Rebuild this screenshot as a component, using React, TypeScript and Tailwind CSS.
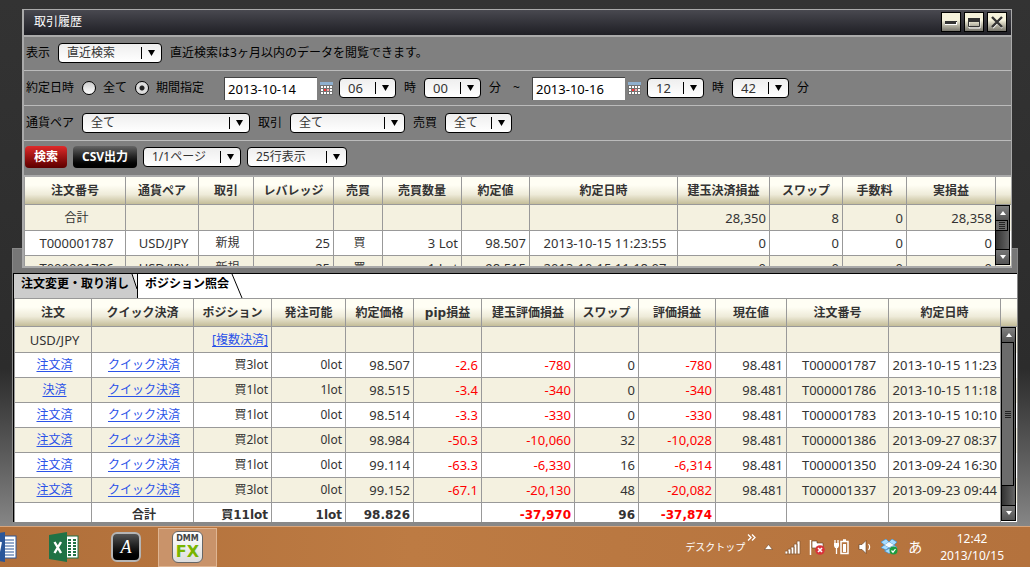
import { useState } from 'react';
import clsx from 'clsx';

interface Column {
  label: string;
  width: number;
  align: 'left' | 'center' | 'right';
}

interface PickerProps {
  label: string;
  options: string[];
  className: string;
}

const HISTORY_COLUMNS: Column[] = [
  { label: '注文番号', width: 101, align: 'center' },
  { label: '通貨ペア', width: 73, align: 'center' },
  { label: '取引', width: 55, align: 'center' },
  { label: 'レバレッジ', width: 80, align: 'right' },
  { label: '売買', width: 49, align: 'center' },
  { label: '売買数量', width: 79, align: 'right' },
  { label: '約定値', width: 68, align: 'right' },
  { label: '約定日時', width: 148, align: 'center' },
  { label: '建玉決済損益', width: 92, align: 'right' },
  { label: 'スワップ', width: 73, align: 'right' },
  { label: '手数料', width: 64, align: 'right' },
  { label: '実損益', width: 89, align: 'right' },
];

const HISTORY_ROWS = [
  ['合計', '', '', '', '', '', '', '', '28,350', '8', '0', '28,358'],
  ['T000001787', 'USD/JPY', '新規', '25', '買', '3 Lot', '98.507', '2013-10-15 11:23:55', '0', '0', '0', '0'],
  ['T000001786', 'USD/JPY', '新規', '25', '買', '1 Lot', '98.515', '2013-10-15 11:18:07', '0', '0', '0', '0'],
];

const POSITION_COLUMNS: Column[] = [
  { label: '注文', width: 77, align: 'center' },
  { label: 'クイック決済', width: 102, align: 'center' },
  { label: 'ポジション', width: 78, align: 'right' },
  { label: '発注可能', width: 74, align: 'right' },
  { label: '約定価格', width: 68, align: 'right' },
  { label: 'pip損益', width: 68, align: 'right' },
  { label: '建玉評価損益', width: 93, align: 'right' },
  { label: 'スワップ', width: 64, align: 'right' },
  { label: '評価損益', width: 77, align: 'right' },
  { label: '現在値', width: 71, align: 'right' },
  { label: '注文番号', width: 102, align: 'center' },
  { label: '約定日時', width: 112, align: 'right' },
];

const POSITION_ROWS = [
  ['USD/JPY', '', '[複数決済]', '', '', '', '', '', '', '', '', ''],
  ['注文済', 'クイック決済', '買3lot', '0lot', '98.507', '-2.6', '-780', '0', '-780', '98.481', 'T000001787', '2013-10-15 11:23'],
  ['決済', 'クイック決済', '買1lot', '1lot', '98.515', '-3.4', '-340', '0', '-340', '98.481', 'T000001786', '2013-10-15 11:18'],
  ['注文済', 'クイック決済', '買1lot', '0lot', '98.514', '-3.3', '-330', '0', '-330', '98.481', 'T000001783', '2013-10-15 10:10'],
  ['注文済', 'クイック決済', '買2lot', '0lot', '98.984', '-50.3', '-10,060', '32', '-10,028', '98.481', 'T000001386', '2013-09-27 08:37'],
  ['注文済', 'クイック決済', '買1lot', '0lot', '99.114', '-63.3', '-6,330', '16', '-6,314', '98.481', 'T000001350', '2013-09-24 16:30'],
  ['注文済', 'クイック決済', '買3lot', '0lot', '99.152', '-67.1', '-20,130', '48', '-20,082', '98.481', 'T000001337', '2013-09-23 09:44'],
  ['', '合計', '買11lot', '1lot', '98.826', '', '-37,970', '96', '-37,874', '', '', ''],
];

const LINKS = ['注文済', '決済', 'クイック決済', '[複数決済]'];

const ALIGN = {
  left: 'pl-0.5 text-left',
  center: 'pl-1.5 text-center',
  right: 'pl-0.5 text-right',
};

const isLatin = (text: string) => /^([-\d.,: T]+|USD\/JPY|\d Lot)$/.test(text);

const Picker = ({ label, options, className }: PickerProps) => (
  <span className={clsx('relative inline-flex shrink-0', className)}>
    <select
      aria-label={label}
      className={clsx(
        'h-5 w-full appearance-none rounded-sm border border-black bg-linear-to-b from-[#eeeeee] to-white pl-2 leading-4 text-[#333]',
        isLatin(options[0]) ? 'text-[13px]' : 'text-xs'
      )}
    >
      {options.map((option) => (
        <option key={option}>{option}</option>
      ))}
    </select>
    <span className="pointer-events-none absolute inset-y-0 right-[7px] flex items-center gap-1.5">
      <span className="h-3 w-px bg-black" />
      <svg width="7" height="6" viewBox="0 0 7 6">
        <path d="M0 0h7L3.5 6z" fill="#000" />
      </svg>
    </span>
  </span>
);

const DateField = ({ label, value }: { label: string; value: string }) => (
  <span className="flex shrink-0 items-center gap-[3px]">
    <input
      type="text"
      aria-label={label}
      defaultValue={value}
      className="h-[23px] w-[93px] border-t border-l border-[#444] bg-white px-[3px] text-[13px] text-black"
    />
    <button type="button" aria-label={`${label}カレンダー`}>
      <svg width="13" height="13" viewBox="0 0 13 13">
        <rect width="13" height="13" fill="#737373" />
        <rect width="13" height="3" fill="#8fb0cf" />
        <path
          d="M1 4h2v2H1zM4 4h2v2H4zM7 4h2v2H7zM10 4h2v2h-2zM1 7h2v2H1zM10 7h2v2h-2zM1 10h2v2H1zM4 10h2v2H4zM7 10h2v2H7zM10 10h2v2h-2z"
          fill="#fff"
        />
        <path d="M4 7h2v2H4z" fill="#ff3535" />
        <path d="M7 7h2v2H7z" fill="#ffa4a4" />
      </svg>
    </button>
  </span>
);

const Scrollbar = ({ thumb }: { thumb: string }) => (
  <div className="absolute top-7 right-px bottom-px flex w-[15px] flex-col border border-black bg-linear-to-r from-[#333] to-[#666]">
    <button
      type="button"
      aria-label="上へスクロール"
      className="flex h-3.5 shrink-0 items-center justify-center bg-linear-to-b from-[#808080] to-[#555]"
    >
      <svg width="6" height="4" viewBox="0 0 6 4">
        <path d="M3 0l3 4H0z" fill="#fff" />
      </svg>
    </button>
    <div className="min-h-0 flex-1">
      <div
        className={clsx(
          'flex w-3 flex-col items-center justify-center gap-px border border-l-0 border-black bg-[#6b6b6b]',
          thumb
        )}
      >
        <span className="h-px w-1.5 bg-[#222]" />
        <span className="h-px w-1.5 bg-[#222]" />
        <span className="h-px w-1.5 bg-[#222]" />
        <span className="h-px w-1.5 bg-[#222]" />
      </div>
    </div>
    <button
      type="button"
      aria-label="下へスクロール"
      className="flex h-[15px] shrink-0 items-center justify-center border-t border-black bg-linear-to-b from-[#777] to-[#555]"
    >
      <svg width="6" height="4" viewBox="0 0 6 4">
        <path d="M0 0h6L3 4z" fill="#fff" />
      </svg>
    </button>
  </div>
);

interface GridProps {
  columns: Column[];
  rows: string[][];
  height: string;
  thumb: string;
  boldTotal?: boolean;
}

const Grid = ({ columns, rows, height, thumb, boldTotal = false }: GridProps) => (
  <div className="relative border-l border-[#999]">
    <div className={clsx('overflow-hidden', height)}>
      <table className="w-full table-fixed border-separate border-spacing-0 text-[#333]">
        <colgroup>
          {columns.map((column) => (
            <col key={column.label} style={{ width: column.width }} />
          ))}
          <col className="w-4" />
        </colgroup>
        <thead>
          <tr>
            {columns.map((column) => (
              <th
                key={column.label}
                className="h-7 border-r border-b border-[#999] bg-linear-to-b from-[#fffef4] from-30% via-[#eeebd9] via-65% to-[#c4bd99] p-0 text-center font-['DejaVu_Sans','Noto_Sans_CJK_JP',sans-serif] text-xs leading-4 font-bold whitespace-nowrap"
              >
                {column.label}
              </th>
            ))}
            <td className="border-b border-[#999] bg-linear-to-b from-[#fffef4] from-30% via-[#eeebd9] via-65% to-[#c4bd99] p-0" />
          </tr>
        </thead>
        <tbody>
          {rows.map((row, rowIndex) => {
            const isTotal = boldTotal && rowIndex === rows.length - 1;
            return (
              <tr key={rowIndex} className={rowIndex % 2 === 0 ? 'bg-[#f4f1e0]' : 'bg-white'}>
                {row.map((text, i) => (
                  <td
                    key={columns[i].label}
                    className={clsx(
                      'border-r border-b border-[#999] py-0 pr-[3px] leading-4 whitespace-nowrap',
                      rowIndex === 0 ? 'h-[26px]' : 'h-[25px]',
                      isTotal
                        ? "font-['DejaVu_Sans','Noto_Sans_CJK_JP',sans-serif] text-xs font-bold"
                        : isLatin(text)
                          ? 'text-[13px]'
                          : 'text-xs',
                      ALIGN[columns[i].align],
                      text.startsWith('-') && 'text-[#ff0000]'
                    )}
                  >
                    {LINKS.includes(text) ? (
                      <a href="#" className="text-[#2a52e8] underline underline-offset-2">
                        {text}
                      </a>
                    ) : (
                      text
                    )}
                  </td>
                ))}
                <td className="p-0" />
              </tr>
            );
          })}
        </tbody>
      </table>
    </div>
    <Scrollbar thumb={thumb} />
  </div>
);

const WINDOW_BUTTON =
  'flex h-5 w-5 items-center justify-center border border-black bg-linear-to-b from-[#f5f2dc] from-40% to-[#77756c]';

const HistoryWindow = () => {
  const [range, setRange] = useState('period');

  return (
    <section className="relative z-10 mr-[18px] ml-[22px] border-2 border-t border-r border-[#aaa] bg-[#808080] text-xs leading-4">
      <header className="flex h-[25px] items-center justify-between bg-linear-to-b from-[#494950] to-[#1f1f25] pr-1 pb-0.5 pl-2.5">
        <h1 className="text-white">取引履歴</h1>
        <div className="flex gap-[3px]">
          <button type="button" aria-label="最小化" className={WINDOW_BUTTON}>
            <svg width="14" height="14" viewBox="0 0 14 14">
              <path d="M1 6h12v3H1z" fill="#333" />
              <path d="M1 9h12v1H1zM12 7h1v3h-1z" fill="#fff" />
            </svg>
          </button>
          <button type="button" aria-label="最大化" className={WINDOW_BUTTON}>
            <svg width="14" height="14" viewBox="0 0 14 14">
              <path d="M2 4h11v9H2z" fill="none" stroke="#fff" />
              <path d="M1.5 3.5h11v8h-11z" fill="none" stroke="#333" />
              <path d="M1 3h12v4H1z" fill="#333" />
            </svg>
          </button>
          <button type="button" aria-label="閉じる" className={WINDOW_BUTTON}>
            <svg width="14" height="14" viewBox="0 0 14 14">
              <path d="M3 3l9 10M12 3l-9 10" stroke="#fff" strokeWidth="1.5" />
              <path d="M2 2l10 10M12 2L2 12" stroke="#333" strokeWidth="2.4" />
            </svg>
          </button>
        </div>
      </header>

      {/* Search conditions */}
      <form onSubmit={(e) => e.preventDefault()}>
        <div className="flex h-[35px] items-center gap-2 border-t-2 border-[#aaa] pb-0.5 pl-0.5">
          <span>表示</span>
          <Picker label="表示" options={['直近検索', '過去検索']} className="w-[104px]" />
          <p>直近検索は3ヶ月以内のデータを閲覧できます。</p>
        </div>

        <div className="flex h-[35px] items-center gap-2 border-t border-[#bbb] pl-0.5">
          <span>約定日時</span>
          <label className="flex items-center gap-[7px]">
            <input
              type="radio"
              name="range"
              checked={range === 'all'}
              onChange={() => setRange('all')}
              className="h-3.5 w-3.5 appearance-none rounded-full border border-black bg-linear-to-b from-[#ccc] to-white checked:bg-[radial-gradient(#222_2px,#ddd_3px)]"
            />
            全て
          </label>
          <label className="flex items-center gap-[7px]">
            <input
              type="radio"
              name="range"
              checked={range === 'period'}
              onChange={() => setRange('period')}
              className="h-3.5 w-3.5 appearance-none rounded-full border border-black bg-linear-to-b from-[#ccc] to-white checked:bg-[radial-gradient(#222_2px,#ddd_3px)]"
            />
            期間指定
          </label>
          <div className="flex items-center gap-2 pl-3">
            <div className="flex items-center gap-1.5">
              <DateField label="開始日" value="2013-10-14" />
              <Picker label="開始時" options={['06']} className="w-[57px]" />
            </div>
            <span>時</span>
            <Picker label="開始分" options={['00']} className="w-[57px]" />
            <span>分</span>
            <span className="px-1">~</span>
            <div className="flex items-center gap-1.5">
              <DateField label="終了日" value="2013-10-16" />
              <Picker label="終了時" options={['12']} className="w-[57px]" />
            </div>
            <span>時</span>
            <Picker label="終了分" options={['42']} className="w-[57px]" />
            <span>分</span>
          </div>
        </div>

        <div className="flex h-[35px] items-center gap-2 border-t border-[#bbb] pl-0.5">
          <span>通貨ペア</span>
          <Picker label="通貨ペア" options={['全て', 'USD/JPY']} className="w-[168px]" />
          <span>取引</span>
          <Picker label="取引" options={['全て', '新規', '決済']} className="w-[115px]" />
          <span>売買</span>
          <Picker label="売買" options={['全て', '買', '売']} className="w-[67px]" />
        </div>

        <div className="flex h-[35px] items-center gap-1.5 border-t border-[#bbb] pb-0.5 pl-px">
          <button
            type="submit"
            className="h-[22px] w-[42px] rounded-sm bg-linear-to-b from-[#e02a2a] to-[#5c0000] font-bold text-white"
          >
            検索
          </button>
          <button
            type="button"
            className="h-[22px] w-16 rounded-sm bg-linear-to-b from-[#666] via-[#222] via-50% to-black font-bold text-white"
          >
            CSV出力
          </button>
          <Picker label="ページ" options={['1/1ページ']} className="w-[98px]" />
          <Picker label="表示行数" options={['25行表示', '50行表示']} className="w-[100px]" />
        </div>
      </form>

      <div className="border-t-2 border-[#aaa]">
        <Grid columns={HISTORY_COLUMNS} rows={HISTORY_ROWS} height="h-[89px]" thumb="h-[11px]" />
      </div>
    </section>
  );
};

const PositionWindow = () => (
  <section className="relative mr-3 ml-3 -mt-5 border border-b-4 border-[#888] bg-[#777] pt-6">
    <div className="border-t border-l border-black bg-white">
      <div className="flex h-6 items-stretch text-xs font-bold" role="tablist">
        <button
          type="button"
          role="tab"
          aria-selected="false"
          className="flex items-start border-r border-black bg-[#ccc] pt-0.5 pl-[7px]"
        >
          注文変更・取り消し
          <svg width="8" height="20" viewBox="0 0 8 20" className="-mt-0.5">
            <path d="M3 0h5v15z" fill="#eee" />
            <path d="M3 0l5 15" stroke="#000" />
          </svg>
        </button>
        <button type="button" role="tab" aria-selected="true" className="flex items-start bg-white pt-0.5 pl-[7px]">
          ポジション照会
          <svg width="14" height="24" viewBox="0 0 14 24" className="-mt-0.5">
            <path d="M3 0l10 24" stroke="#000" />
          </svg>
        </button>
      </div>
      <div className="border-t border-[#999]">
        <Grid
          columns={POSITION_COLUMNS}
          rows={POSITION_ROWS}
          height="h-[223px]"
          thumb="h-36"
          boldTotal
        />
      </div>
    </div>
  </section>
);

const Taskbar = () => (
  <footer className="flex h-[41px] items-center justify-between overflow-hidden border-t border-[#d8a57c] bg-linear-to-r from-[#b06f3a] via-[#bd7b43] via-40% to-[#b4723d] pr-[26px] text-white">
    <nav className="flex items-center">
      <button type="button" aria-label="Word" className="-ml-[13px]">
        <svg width="30" height="30" viewBox="0 0 30 30">
          <rect x="16" y="4" width="13" height="22" fill="#fff" stroke="#2a5699" />
          <path d="M18 8h9M18 11h9M18 14h9M18 17h9M18 20h9M18 23h9" stroke="#2a5699" />
          <path d="M0 3l18-3v30L0 27z" fill="#2a5699" />
          <path d="M4 10l2 10 3-9 3 9 2-10" fill="none" stroke="#fff" strokeWidth="2" />
        </svg>
      </button>
      <button type="button" aria-label="Excel" className="ml-8">
        <svg width="30" height="30" viewBox="0 0 30 30">
          <rect x="16" y="4" width="13" height="22" fill="#fff" stroke="#207245" />
          <path
            d="M19 7h3v2h-3zM24 7h3v2h-3zM19 10h3v2h-3zM24 10h3v2h-3zM19 13h3v2h-3zM24 13h3v2h-3zM19 16h3v2h-3zM24 16h3v2h-3zM19 19h3v2h-3zM24 19h3v2h-3zM19 22h3v2h-3zM24 22h3v2h-3z"
            fill="#207245"
          />
          <path d="M0 3l18-3v30L0 27z" fill="#207245" />
          <path d="M5.5 10l6.500 11M12 10L5.500 21" stroke="#fff" strokeWidth="2.4" />
        </svg>
      </button>
      <button
        type="button"
        className="ml-8 flex h-[30px] w-[30px] items-center justify-center rounded-md border-2 border-[#b5b5b5] bg-linear-to-b from-[#555] to-black font-['Liberation_Serif',serif] text-lg leading-none italic"
      >
        A
      </button>
      <button
        type="button"
        className="ml-[17px] flex h-[39px] w-[59px] items-center justify-center border border-[#dfb592] bg-[#c9936a]"
      >
        <span className="flex h-8 w-[31px] flex-col items-center justify-center rounded-md border border-[#666] bg-linear-to-b from-white to-[#ddd] font-['DejaVu_Sans',sans-serif] font-bold">
          <span className="text-[8px] leading-2.5 text-[#444]">DMM</span>
          <span className="text-base leading-4 text-[#78b400]">FX</span>
        </span>
      </button>
    </nav>

    <div className="flex items-center">
      <span className="text-[10px] leading-4">デスクトップ</span>
      <button type="button" aria-label="その他" className="mb-5 ml-0.5">
        <svg width="9" height="7" viewBox="0 0 9 7">
          <path d="M1 .5l3 3-3 3M5 .5l3 3-3 3" fill="none" stroke="#fff" strokeWidth="1.3" />
        </svg>
      </button>
      <button type="button" aria-label="隠れているアイコン" className="ml-2">
        <svg width="9" height="6" viewBox="0 0 9 6">
          <path d="M4.500 .5l4 5h-8z" fill="#fff" stroke="#6b4728" strokeWidth=".6" />
        </svg>
      </button>
      <div className="ml-3 flex items-center gap-2">
        <svg width="16" height="16" viewBox="0 0 16 16">
          <path
            d="M0 12h3v3H0zM3 10h3v5H3zM6 8h3v7H6zM9 5h3v10H9zM12 2h3v13h-3z"
            fill="#fff"
            stroke="#8a5a34"
            strokeWidth=".8"
          />
        </svg>
        <svg width="16" height="16" viewBox="0 0 16 16">
          <path d="M1.500 1v15" stroke="#fff" strokeWidth="1.500" />
          <path d="M3 2h5v2h6v7H8V9H3z" fill="#fff" stroke="#5b3a20" strokeWidth=".6" />
          <circle cx="11" cy="11" r="4.800" fill="#d9333a" />
          <path d="M9 9l4 4M13 9l-4 4" stroke="#fff" strokeWidth="1.600" />
        </svg>
        <svg width="16" height="16" viewBox="0 0 16 16">
          <path d="M8 2.500h7v12H8zM10 1h3" fill="none" stroke="#fff" strokeWidth="1.500" />
          <path d="M10 5h3v8h-3z" fill="#fff" />
          <path d="M2 1v4M5 1v4M3.500 8v7" stroke="#fff" strokeWidth="1.300" />
          <path d="M1 4h5v3L5 9H2L1 7z" fill="#fff" />
        </svg>
        <svg width="16" height="16" viewBox="0 0 16 16">
          <path d="M2 5.500h3L9 1.500v13l-4-4H2z" fill="#fff" stroke="#5b3a20" strokeWidth=".6" />
          <path d="M11.500 5c1.500 2 1.500 4 0 6" fill="none" stroke="#fff" strokeWidth="1.200" />
        </svg>
        <svg width="17" height="16" viewBox="0 0 17 16">
          <path
            d="M5 0L0 3l3.500 3L8 3zM11 0L8 3l5 3 3-3zM0 8.500L5 11l3-2.500L3.500 6zM8 8.500L11 11l5-2.500L13 6zM3.500 12L8 14.500l4.500-2.500L11 11 8 9.500 5 11z"
            fill="#a7dcff"
            stroke="#2f8fd8"
            strokeWidth=".6"
          />
          <path d="M3.500 6L8 3l5 3-5 2.500z" fill="#f2faff" />
          <circle cx="12.500" cy="11.500" r="4" fill="#1d9c3e" />
          <path d="M10.500 11.500l1.500 1.700 2.500-3.200" fill="none" stroke="#fff" strokeWidth="1.200" />
        </svg>
        <span className="pl-0.5 text-sm leading-4">あ</span>
      </div>
      <p className="ml-[18px] text-center text-xs leading-[17px]">
        12:42
        <br />
        2013/10/15
      </p>
    </div>
  </footer>
);

export default function App() {
  return (
    <div className="flex min-h-screen flex-col overflow-hidden bg-linear-to-b from-[#333] via-[#2c2c2c] via-65% to-[#a0a0a0] font-['Noto_Sans','Noto_Sans_CJK_JP',sans-serif]">
      <main className="flex-1 pt-[9px]">
        <HistoryWindow />
        <PositionWindow />
      </main>
      <Taskbar />
    </div>
  );
}
